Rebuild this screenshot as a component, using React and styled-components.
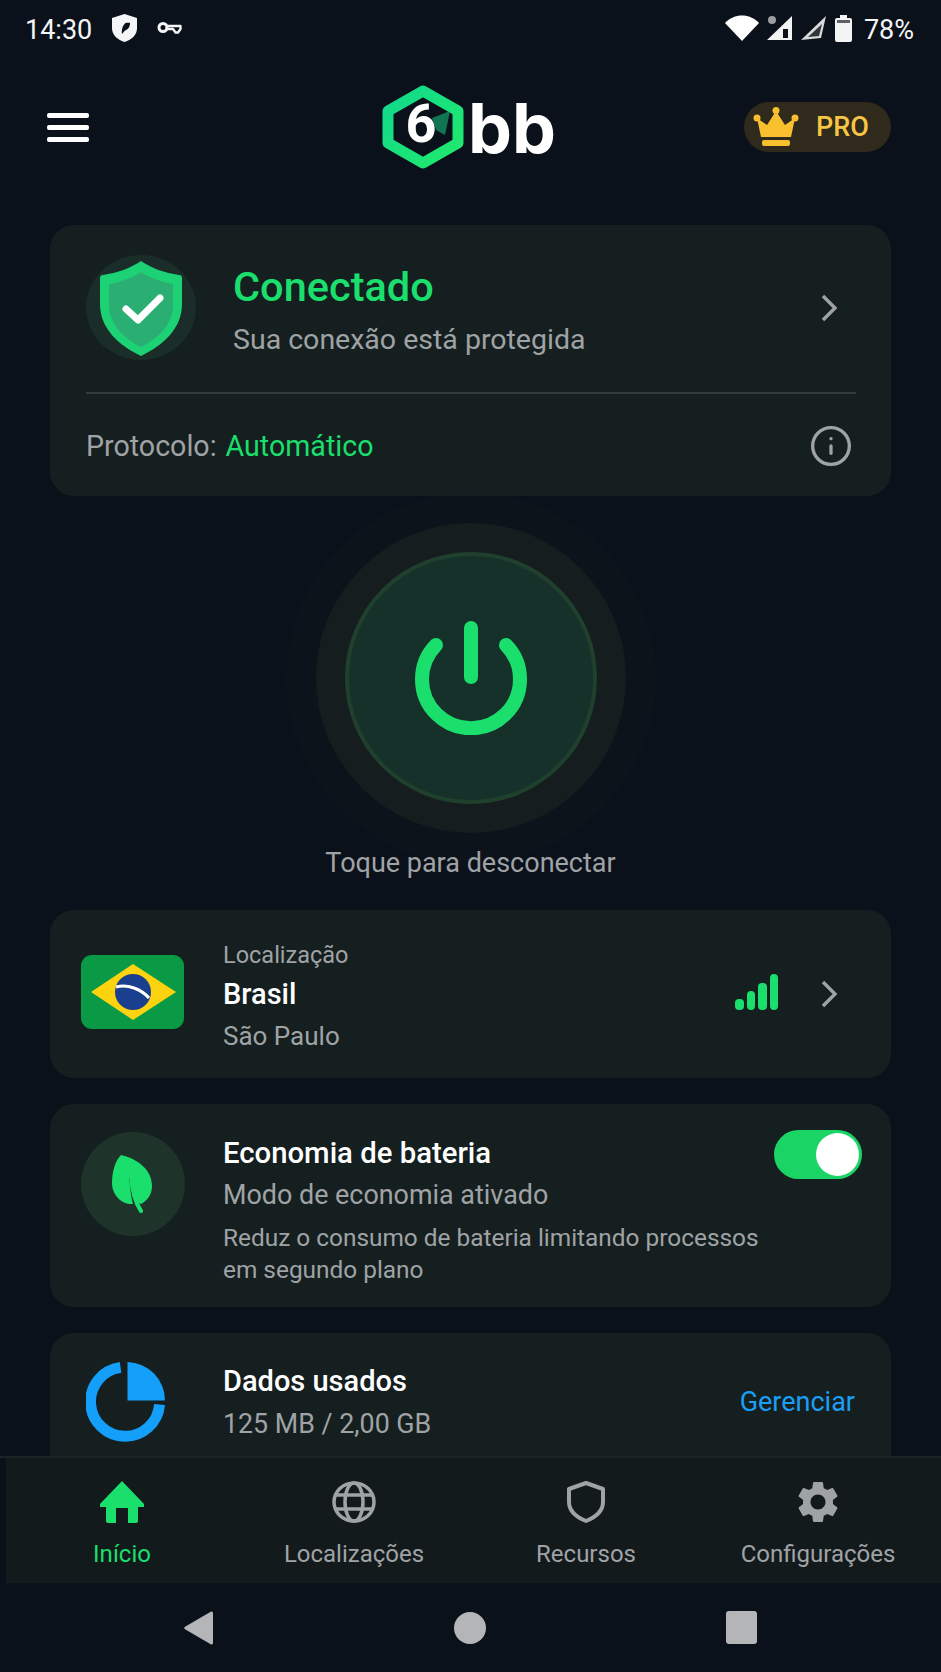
import React from 'react'
import styled, { createGlobalStyle } from 'styled-components'
import { Info } from 'lucide-react'

const GREEN = '#1adf6c'
const GREY = '#a0a3a6'

const GlobalStyle = createGlobalStyle`
  html, body {
    margin: 0;
    padding: 0;
    background: #0a111a;
  }
  * {
    box-sizing: border-box;
  }
`

const Screen = styled.div`
  width: 941px;
  height: 1672px;
  display: flex;
  flex-direction: column;
  overflow: hidden;
  background: #0a111a;
  color: #fff;
  font-family: Roboto, "Noto Sans", sans-serif;
`

/* status bar */
const StatusBar = styled.div`
  height: 56px;
  flex: none;
  padding: 0 27px 0 25px;
  display: flex;
  align-items: center;
  justify-content: space-between;
  font-size: 27px;
  color: #f4f5f6;
`
const StatusGroup = styled.div`
  display: flex;
  align-items: center;
  gap: ${p => p.$gap || 18}px;
`
const StatusText = styled.span`
  line-height: 30px;
  margin-top: 3px;
  margin-left: ${p => p.$ml || 0}px;
`

/* top header */
const Header = styled.header`
  height: 169px;
  flex: none;
  padding: 0 50px 27px 47px;
  display: grid;
  grid-template-columns: 1fr auto 1fr;
  align-items: center;
`
const Burger = styled.div`
  width: 42px;
  display: flex;
  flex-direction: column;
  gap: 7px;
  span {
    height: 5px;
    border-radius: 2px;
    background: #fff;
  }
`
const ProPill = styled.div`
  justify-self: end;
  width: 147px;
  height: 50px;
  border-radius: 25px;
  background: #2f2a1b;
  padding-left: 9px;
  display: flex;
  align-items: center;
  gap: 17px;
  font-size: 27px;
  font-weight: 500;
  color: #f6c544;
`

const Content = styled.main`
  flex: 1;
  min-height: 0;
  overflow: hidden;
  padding: 0 50px;
  display: flex;
  flex-direction: column;
`
const Card = styled.section`
  flex: none;
  background: #151f20;
  border-radius: 24px;
  margin-bottom: 26px;
  height: ${p => p.$h}px;
  padding: ${p => p.$pad};
`
const Row = styled.div`
  display: flex;
  align-items: ${p => p.$align || 'center'};
`

/* status card */
const ShieldBadge = styled.div`
  width: 110px;
  height: 105px;
  border-radius: 50%;
  background: #1a2d28;
  display: flex;
  align-items: center;
  justify-content: center;
  flex: none;
`
const StatusCopy = styled.div`
  flex: 1;
  margin-left: 37px;
`
const Connected = styled.div`
  font-size: 41.5px;
  line-height: 48px;
  font-weight: 500;
  color: ${GREEN};
  margin-top: 4px;
`
const Muted = styled.div`
  color: ${p => p.$color || GREY};
  font-size: ${p => p.$size || 25}px;
  line-height: ${p => p.$lh || 32}px;
  margin-top: ${p => p.$mt || 0}px;
`
const Chevron = styled.svg`
  flex: none;
  width: 18px;
  height: 30px;
  margin-right: ${p => p.$mr || 0}px;
`
const Divider = styled.div`
  height: 2px;
  background: #333c3c;
  margin-top: 32px;
`
const ProtocolRow = styled(Row)`
  justify-content: space-between;
  height: 40px;
  margin-top: 32px;
  font-size: 28.6px;
  color: ${GREY};
`
const Accent = styled.span`
  color: ${GREEN};
  margin-left: 9px;
`
const InfoIcon = styled(Info)`
  color: ${GREY};
  margin-right: 3px;
`

/* power button */
const PowerSection = styled.div`
  flex: none;
  padding-top: 1px;
  margin-bottom: 32px;
  display: flex;
  flex-direction: column;
  align-items: center;
`
const PowerRing = styled.div`
  width: 310px;
  height: 310px;
  border-radius: 50%;
  background: #161d1e;
  box-shadow: 0 0 0 30px rgba(24, 32, 34, 0.2);
  display: flex;
  align-items: center;
  justify-content: center;
`
const PowerButton = styled.div`
  width: 252px;
  height: 252px;
  border-radius: 50%;
  background: #15312a;
  border: 4px solid #20402e;
  display: flex;
  align-items: center;
  justify-content: center;
`
const PowerLabel = styled.div`
  margin-top: 15px;
  font-size: 27px;
  line-height: 30px;
  color: ${GREY};
`

/* list cards */
const ListRow = styled(Row)`
  height: 100%;
`
const CardCopy = styled.div`
  flex: 1;
  min-width: 0;
  margin-top: ${p => p.$mt || 0}px;
`
const Title = styled.div`
  font-size: ${p => p.$size || 29}px;
  line-height: 34px;
  font-weight: 500;
  color: #fff;
  margin-top: ${p => p.$mt || 0}px;
`
const Flag = styled.svg`
  width: 103px;
  height: 74px;
  flex: none;
  margin: 0 39px 4px 0;
`
const Bars = styled.div`
  display: flex;
  align-items: flex-end;
  gap: 3px;
  height: 36px;
  margin: 0 42px 4px 0;
`
const Bar = styled.i`
  display: block;
  width: 8.5px;
  height: ${p => p.$h}px;
  border-radius: 4px;
  background: ${GREEN};
`
const LeafBadge = styled.div`
  width: 104px;
  height: 104px;
  border-radius: 50%;
  background: #1e3329;
  margin: 2px 38px 0 0;
  flex: none;
  display: flex;
  align-items: center;
  justify-content: center;
`
const Toggle = styled.div`
  flex: none;
  width: 88px;
  height: 49px;
  border-radius: 25px;
  background: #1ad566;
  padding: 3px;
  display: flex;
  justify-content: flex-end;
  &::after {
    content: "";
    width: 43px;
    height: 43px;
    border-radius: 50%;
    background: #fff;
  }
`
const BatteryTop = styled.div`
  display: flex;
  align-items: flex-start;
  justify-content: space-between;
`
const DataIcon = styled.svg`
  width: 79px;
  height: 81px;
  flex: none;
  margin-right: 58px;
`
const ManageLink = styled.span`
  font-size: 27px;
  color: #1a9ff5;
`

/* bottom tabs */
const TabBar = styled.nav`
  flex: none;
  height: 127px;
  border-top: 2px solid #1b2324;
  padding-left: 6px;
`
const TabTrack = styled.div`
  height: 100%;
  background: #121a1c;
  display: grid;
  grid-template-columns: repeat(4, 232px);
`
const Tab = styled.div`
  display: flex;
  flex-direction: column;
  align-items: center;
  padding-top: 23px;
  font-size: 24px;
  color: ${p => (p.$active ? GREEN : GREY)};
  svg {
    display: block;
    margin-bottom: 17px;
  }
`
const GearSvg = styled.svg`
  && {
    margin-top: -4px;
    margin-bottom: 13px;
  }
`

/* android navigation */
const SystemNav = styled.div`
  flex: none;
  height: 89px;
  display: flex;
  align-items: center;
  padding: 0 184px 0 184px;
  justify-content: space-between;
`
const SystemSquare = styled.div`
  width: 31px;
  height: 33px;
  border-radius: 3px;
  background: #b3b5b6;
`
const SystemDot = styled.div`
  width: 32px;
  height: 32px;
  border-radius: 50%;
  background: #b3b5b6;
`

const ChevronRight = ({ mr }) => (
  <Chevron $mr={mr} viewBox="0 0 18 30">
    <path d="M3 3l12 12L3 27" fill="none" stroke={GREY} strokeWidth="3.4" />
  </Chevron>
)

const WifiIcon = () => (
  <svg width="34" height="26" viewBox="0 0 34 26">
    <path d="M0 8C9-2 25-2 34 8L17 26Z" fill="#fff" />
  </svg>
)

const CellIcon = () => (
  <svg width="26" height="26" viewBox="0 0 26 26">
    <circle cx="5" cy="5" r="4" fill="#9b9d9f" />
    <path d="M0 25L25 1v24Z" fill="#f3f3f3" />
    <path d="M16 23V14h5v9Z" fill="#0a111a" />
  </svg>
)

const CellIconFaint = () => (
  <svg width="26" height="24" viewBox="0 0 26 24">
    <path d="M0 24L25 0l-5 22Z" fill="#d8d9da" />
    <path d="M7 21L21 8l-3 12Z" fill="#30363a" />
  </svg>
)

const BatteryIcon = () => (
  <svg width="17" height="27" viewBox="0 0 17 27">
    <path d="M5 0h7v3h3a2 2 0 0 1 2 2v20a2 2 0 0 1-2 2H2a2 2 0 0 1-2-2V5a2 2 0 0 1 2-2h3Z" fill="#f4f4f4" />
    <path d="M2 5h13v3H2Z" fill="#5c6064" />
  </svg>
)

const VpnShield = () => (
  <svg width="25" height="28" viewBox="0 0 25 28">
    <path d="M12.5 0L25 4v10c0 7-5 11.500-12.500 14C5 25.500 0 21 0 14V4Z" fill="#f4f5f6" />
    <path d="M13.500 9c2.500-.5 4-.5 4.500 0 .2 3-1.500 6.500-5 7.500l-3 3.500c-.5-3.500 0-8 3.500-11Z" fill="#0a111a" />
  </svg>
)

const KeyIcon = () => (
  <svg width="25" height="14" viewBox="0 0 25 14">
    <circle cx="6" cy="6.500" r="4" fill="none" stroke="#f4f5f6" strokeWidth="3" />
    <path d="M10 5h13.500v3l-2.500 3.500h-2.500L16 8h-6Z" fill="none" stroke="#f4f5f6" strokeWidth="2.400" strokeLinejoin="round" />
  </svg>
)

const Logo = () => (
  <svg width="176" height="84" viewBox="0 0 176 84">
    <defs>
      <linearGradient id="hexStroke" x1="0" y1="0" x2="1" y2="1">
        <stop offset="0" stopColor="#12d98c" />
        <stop offset="1" stopColor="#20ea6c" />
      </linearGradient>
    </defs>
    <path d="M42 6L77 26V58L42 78 7 58V26Z" fill="none" stroke="url(#hexStroke)" strokeWidth="11" strokeLinejoin="round" />
    <path d="M51 33L69 26l-5 24-9-5Z" fill="#15b87a" opacity=".6" />
    <text x="40" y="57" fontFamily="Roboto, sans-serif" fontWeight="700" fontSize="54" fill="#fff" textAnchor="middle">6</text>
    <text x="87" y="68" fontFamily="Inter, sans-serif" fontWeight="700" fontSize="69" fill="#fff" textLength="88" lengthAdjust="spacingAndGlyphs">bb</text>
  </svg>
)

const Crown = () => (
  <svg width="46" height="40" viewBox="0 0 46 40">
    <g fill="#f8bf2e">
      <circle cx="4" cy="11" r="3.500" />
      <circle cx="23" cy="3.500" r="3.500" />
      <circle cx="42" cy="11" r="3.500" />
      <path d="M4 11l10 7L23 4l9 14 10-7-4 19H8Z" />
      <rect x="9" y="33" width="28" height="6" rx="2" />
    </g>
  </svg>
)

const ShieldCheck = () => (
  <svg width="84" height="98" viewBox="0 0 84 98">
    <path d="M42 2c10 7 24 12 38 14 2 0 3 1 3 3v26c0 24-18 41-41 52C19 86 1 69 1 45V19c0-2 1-3 3-3C18 14 32 9 42 2Z" fill="#1cd274" />
    <path d="M42 13c9 6 21 10 32 12v21c0 19-14 33-32 42C24 79 10 65 10 46V25c11-2 23-6 32-12Z" fill="#2aae72" />
    <path d="M27 50l12 11 22-22" fill="none" stroke="#fff" strokeWidth="7" strokeLinecap="round" strokeLinejoin="round" />
  </svg>
)

const PowerIcon = () => (
  <svg width="112" height="114" viewBox="0 0 112 114">
    <g fill="none" stroke={GREEN} strokeWidth="14" strokeLinecap="round">
      <path d="M56 7v49" />
      <path d="M21 24A49 49 0 1 0 91 24" />
    </g>
  </svg>
)

const BrazilFlag = () => (
  <Flag viewBox="0 0 103 74">
    <rect width="103" height="74" rx="11" fill="#0a9a45" />
    <path d="M52 9l43 28-43 28L10 37Z" fill="#fdd20e" />
    <circle cx="52" cy="37" r="18" fill="#1a3f8e" />
    <path d="M35 32c12-3 25 2 33 11" fill="none" stroke="#fff" strokeWidth="3" />
  </Flag>
)

const SignalBars = () => (
  <Bars>
    {[11, 19, 27, 36].map(h => <Bar key={h} $h={h} />)}
  </Bars>
)

const Leaf = () => (
  <svg width="42" height="58" viewBox="0 0 42 58">
    <path d="M9 0c14 3 31 13 31 31 0 8-4 14-11 18l-6-2-6-28c1 14 2 22 4 30C10 50 0 40 0 28 0 17 3 6 9 0Z" fill={GREEN} />
    <path d="M19 21c1 14 3 25 10 35" fill="none" stroke={GREEN} strokeWidth="4" strokeLinecap="round" />
  </svg>
)

const DataPie = () => (
  <DataIcon viewBox="0 0 80 82">
    <path d="M35 6.500A35 35 0 1 0 74.500 44" fill="none" stroke="#149ffb" strokeWidth="11" />
    <path d="M42 1a39 39 0 0 1 38 39H42Z" fill="#149ffb" />
  </DataIcon>
)

const HomeIcon = () => (
  <svg width="44" height="42" viewBox="0 0 44 42">
    <path d="M22 0l22 23v3h-6v14a2 2 0 0 1-2 2h-8V27h-12v15H8a2 2 0 0 1-2-2V26H0v-3Z" fill={GREEN} />
  </svg>
)

const GlobeIcon = () => (
  <svg width="44" height="42" viewBox="0 0 44 42">
    <g fill="none" stroke={GREY} strokeWidth="3.500">
      <ellipse cx="22" cy="21" rx="20" ry="19" />
      <ellipse cx="22" cy="21" rx="9" ry="19" />
      <path d="M3 14h38M3 28h38" />
    </g>
  </svg>
)

const ShieldOutline = () => (
  <svg width="40" height="42" viewBox="0 0 40 42">
    <path d="M20 2l17 6v13c0 9-7 15-17 19C10 36 3 30 3 21V8Z" fill="none" stroke={GREY} strokeWidth="4" strokeLinejoin="round" />
  </svg>
)

const GearIcon = () => (
  <GearSvg width="50" height="50" viewBox="0 0 24 24">
    <path fill={GREY} d="M19.140 12.940c.04-.3.060-.61.060-.94 0-.32-.020-.64-.070-.94l2.030-1.580a.49.49 0 0 0 .120-.61l-1.920-3.320a.488.488 0 0 0-.59-.22l-2.390.96c-.5-.38-1.030-.7-1.620-.94l-.36-2.540a.484.484 0 0 0-.48-.41h-3.840c-.24 0-.43.170-.47.41l-.36 2.540c-.59.240-1.130.570-1.620.94l-2.390-.96c-.22-.080-.47 0-.59.220L2.740 8.870c-.12.210-.080.470.120.610l2.030 1.580c-.05.300-.090.630-.090.940s.020.640.070.940l-2.030 1.580a.49.49 0 0 0-.120.610l1.920 3.320c.12.220.370.290.590.220l2.390-.96c.5.380 1.030.7 1.620.94l.36 2.540c.05.240.240.410.48.410h3.840c.24 0 .44-.170.47-.41l.36-2.540c.59-.240 1.130-.560 1.620-.94l2.390.96c.22.080.47 0 .59-.220l1.920-3.320c.12-.220.070-.470-.120-.610l-2.010-1.580zM12 15.600c-1.980 0-3.600-1.620-3.600-3.600s1.620-3.600 3.600-3.600 3.600 1.620 3.600 3.600-1.620 3.600-3.600 3.600z" />
  </GearSvg>
)

const BackTriangle = () => (
  <svg width="30" height="34" viewBox="0 0 30 34">
    <path d="M29 2v30a1.500 1.500 0 0 1-2.300 1.200L1 18.200a1.500 1.500 0 0 1 0-2.400L26.700.8A1.500 1.500 0 0 1 29 2Z" fill="#b3b5b6" />
  </svg>
)

const tabs = [
  { label: 'Início', icon: <HomeIcon />, active: true },
  { label: 'Localizações', icon: <GlobeIcon /> },
  { label: 'Recursos', icon: <ShieldOutline /> },
  { label: 'Configurações', icon: <GearIcon /> },
]

const App = () => {
  return (
    <Screen>
      <GlobalStyle />
      <StatusBar>
        <StatusGroup $gap={20}>
          <StatusText>14:30</StatusText>
          <VpnShield />
          <KeyIcon />
        </StatusGroup>
        <StatusGroup $gap={8}>
          <WifiIcon />
          <CellIcon />
          <CellIconFaint />
          <BatteryIcon />
          <StatusText $ml={4}>78%</StatusText>
        </StatusGroup>
      </StatusBar>

      <Header>
        <Burger><span /><span /><span /></Burger>
        <Logo />
        <ProPill>
          <Crown />
          PRO
        </ProPill>
      </Header>

      <Content>
        <Card $h={271} $pad="30px 35px 0 36px">
          <Row>
            <ShieldBadge><ShieldCheck /></ShieldBadge>
            <StatusCopy>
              <Connected>Conectado</Connected>
              <Muted $size={28.5} $lh={34} $mt={12}>Sua conexão está protegida</Muted>
            </StatusCopy>
            <ChevronRight mr={18} />
          </Row>
          <Divider />
          <ProtocolRow>
            <span>Protocolo:<Accent>Automático</Accent></span>
            <InfoIcon size={44} strokeWidth={1.8} />
          </ProtocolRow>
        </Card>

        <PowerSection>
          <PowerRing>
            <PowerButton><PowerIcon /></PowerButton>
          </PowerRing>
          <PowerLabel>Toque para desconectar</PowerLabel>
        </PowerSection>

        <Card $h={168} $pad="0 53px 0 31px">
          <ListRow>
            <BrazilFlag />
            <CardCopy $mt={4}>
              <Muted $size={23.5} $lh={28}>Localização</Muted>
              <Title $mt={8}>Brasil</Title>
              <Muted $size={26} $lh={32} $mt={9}>São Paulo</Muted>
            </CardCopy>
            <SignalBars />
            <ChevronRight />
          </ListRow>
        </Card>

        <Card $h={203} $pad="26px 29px 0 31px">
          <Row $align="flex-start">
            <LeafBadge><Leaf /></LeafBadge>
            <CardCopy>
              <BatteryTop>
                <Title $mt={6} $size={29.3}>Economia de bateria</Title>
                <Toggle />
              </BatteryTop>
              <Muted $size={26.9} $lh={34} $mt={-1}>Modo de economia ativado</Muted>
              <Muted $size={24.4} $mt={10}>Reduz o consumo de bateria limitando processos<br />em segundo plano</Muted>
            </CardCopy>
          </Row>
        </Card>

        <Card $h={168} $pad="28px 36px 0 36px">
          <Row>
            <DataPie />
            <CardCopy>
              <Title>Dados usados</Title>
              <Muted $size={26.8} $mt={10}>125 MB / 2,00 GB</Muted>
            </CardCopy>
            <ManageLink>Gerenciar</ManageLink>
          </Row>
        </Card>
      </Content>

      <TabBar>
        <TabTrack>
          {tabs.map(t => (
            <Tab key={t.label} $active={t.active}>
              {t.icon}
              {t.label}
            </Tab>
          ))}
        </TabTrack>
      </TabBar>

      <SystemNav>
        <BackTriangle />
        <SystemDot />
        <SystemSquare />
      </SystemNav>
    </Screen>
  )
}

export default App
